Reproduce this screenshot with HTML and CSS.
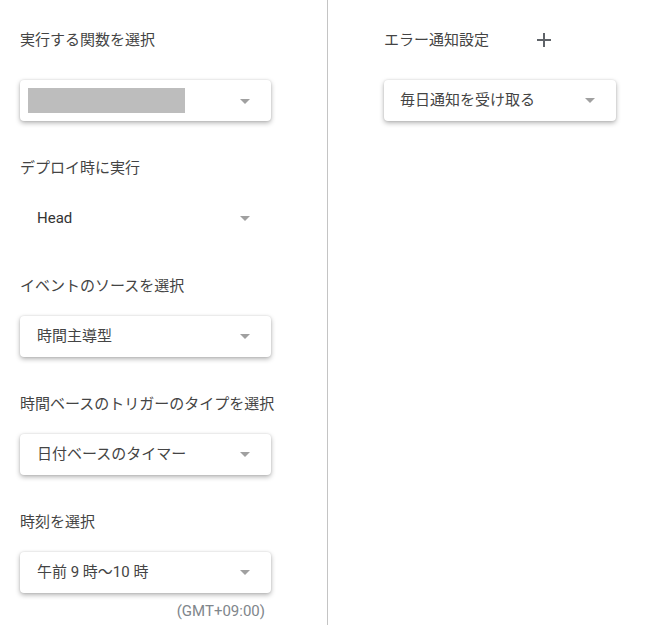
FILE: index.html
```html
<!DOCTYPE html>
<html lang="ja">
<head>
  <meta charset="utf-8" />
  <meta name="viewport" content="width=device-width, initial-scale=1" />
  <title>トリガーを追加</title>
  <link rel="stylesheet" href="styles.css">
</head>
<body>
  <div class="page">
    <div class="col-left">
      <div class="field">
        <div class="label">実行する関数を選択</div>
        <div class="select select-first">
          <div class="masked"></div>
          <span class="arrow"></span>
        </div>
      </div>

      <div class="field">
        <div class="label">デプロイ時に実行</div>
        <div class="select select-flat">
          <span class="value value-latin">Head</span>
          <span class="arrow"></span>
        </div>
      </div>

      <div class="field">
        <div class="label">イベントのソースを選択</div>
        <div class="select">
          <span class="value">時間主導型</span>
          <span class="arrow"></span>
        </div>
      </div>

      <div class="field">
        <div class="label">時間ベースのトリガーのタイプを選択</div>
        <div class="select">
          <span class="value">日付ベースのタイマー</span>
          <span class="arrow"></span>
        </div>
      </div>

      <div class="field">
        <div class="label">時刻を選択</div>
        <div class="select">
          <span class="value">午前 9 時〜10 時</span>
          <span class="arrow"></span>
        </div>
        <div class="hint">(GMT+09:00)</div>
      </div>
    </div>

    <div class="col-right">
      <div class="label-row">
        <div class="label">エラー通知設定</div>
        <svg class="plus" width="14" height="14" viewBox="0 0 14 14">
          <path d="M7 0v14M0 7h14" stroke="#5f6368" stroke-width="2" fill="none" />
        </svg>
      </div>
      <div class="select select-wide">
        <span class="value">毎日通知を受け取る</span>
        <span class="arrow"></span>
      </div>
    </div>
  </div>
</body>
</html>
```

FILE: styles.css
```css
body {
  font-family: Roboto, "Noto Sans CJK JP", sans-serif;
  margin: 0;
  padding: 0;
  background-color: #fff;
  color: #444;
}
.page {
  display: flex;
  align-items: flex-start;
}
.col-left {
  width: 287px;
  height: 595px;
  padding: 30px 20px 0;
  border-right: 1px solid #c4c4c4;
}
.col-right {
  padding: 30px 0 0 56px;
}
.field {
  margin-bottom: 37px;
}
.label {
  font-size: 15px;
  line-height: 20px;
  color: #444;
}
.label-row {
  display: flex;
  align-items: center;
  gap: 48px;
}
.plus {
  display: block;
}
.select {
  display: flex;
  align-items: center;
  justify-content: space-between;
  width: 251px;
  height: 41px;
  margin-top: 20px;
  padding: 0 21px 2px 17px;
  box-sizing: border-box;
  background-color: #fff;
  border-radius: 4px;
  box-shadow: 0 2px 5px rgba(0, 0, 0, 0.3), 0 0 2px rgba(0, 0, 0, 0.12);
}
.select-first {
  margin-top: 30px;
  padding: 0 21px 0 8px;
}
.select-flat {
  box-shadow: none;
}
.select-wide {
  width: 232px;
  margin-top: 30px;
  padding-left: 16px;
}
.masked {
  width: 157px;
  height: 25px;
  background-color: #bdbdbd;
}
.value {
  font-size: 15px;
  line-height: 20px;
  color: #444;
}
.value-latin {
  color: #333;
}
.arrow {
  width: 0;
  height: 0;
  margin-top: 2px;
  border-left: 5px solid transparent;
  border-right: 5px solid transparent;
  border-top: 5px solid #a0a0a0;
}
.hint {
  width: 251px;
  margin-top: 8px;
  padding-right: 6px;
  box-sizing: border-box;
  text-align: right;
  font-size: 15px;
  line-height: 20px;
  color: #80868b;
}
```
